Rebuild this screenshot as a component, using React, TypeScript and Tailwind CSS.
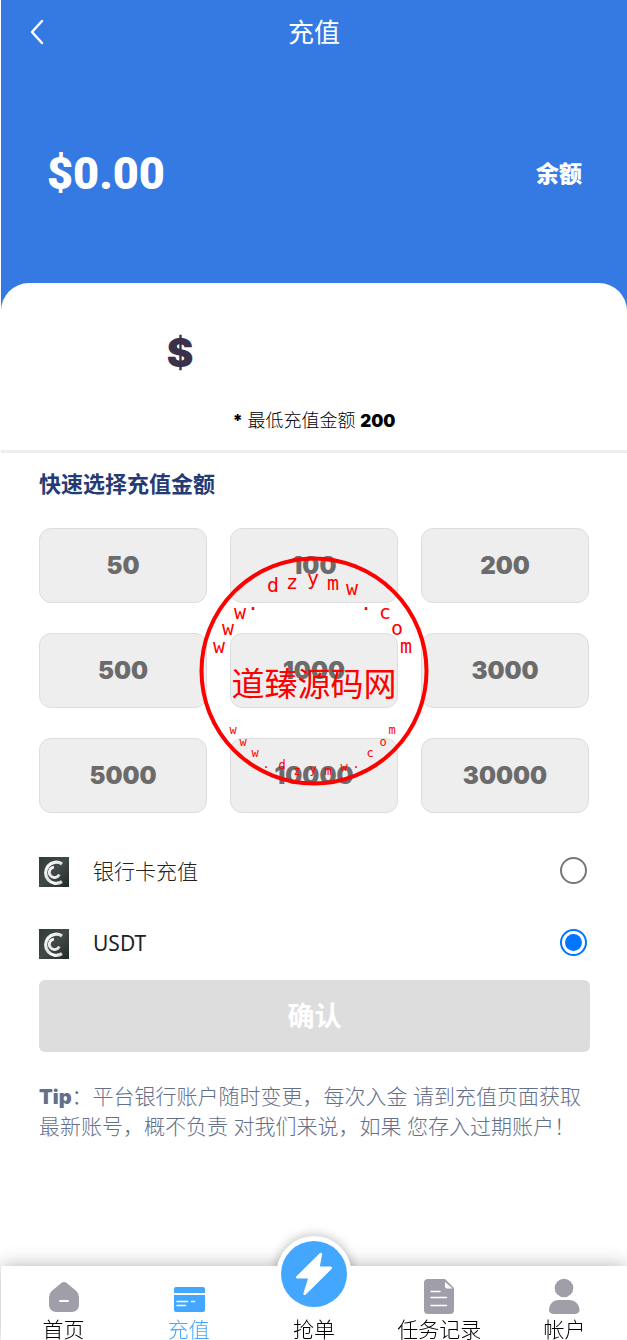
import { useState } from "react";
import type { ReactNode } from "react";

const amounts = [50, 100, 200, 500, 1000, 3000, 5000, 10000, 30000];

const methods = [
  { id: "bank", name: "银行卡充值", cls: "font-light" },
  { id: "usdt", name: "USDT", cls: "font-normal" },
];

type Glyph = [string, number, number];

const upperRing: Glyph[] = [
  ["w", 20, 97], ["w", 29, 79], ["w", 41, 63], [".", 54, 54],
  ["d", 74, 36], ["z", 93, 33], ["y", 114, 29], ["m", 134, 34], ["w", 153, 39],
  [".", 167, 54], ["c", 186, 63], ["o", 198, 79], ["m", 207, 97],
];

const lowerRing: Glyph[] = [
  ["w", 34, 178], ["w", 44, 190], ["w", 56, 201], [".", 67, 212],
  ["d", 83, 213], ["z", 98, 219], ["y", 114, 217], ["m", 129, 219], ["w", 145, 215],
  [".", 157, 212], ["c", 171, 201], ["o", 184, 190], ["m", 193, 178],
];

function Stamp() {
  return (
    <svg
      viewBox="0 0 230 230"
      className="absolute left-1/2 top-1/2 w-[230px] h-[230px] -translate-x-1/2 -translate-y-1/2 pointer-events-none fill-[#ff0000] font-['DejaVu_Sans_Mono',monospace]"
      textAnchor="middle"
    >
      <circle cx="115" cy="115" r="112.500" fill="none" stroke="#ff0000" strokeWidth="4" />
      {upperRing.map(([ch, x, y], i) => (
        <text key={i} x={x} y={y} className="text-[20px]">{ch}</text>
      ))}
      <text x="115" y="140" className="text-[33px] font-['Noto_Sans_CJK_SC',sans-serif]">道臻源码网</text>
      {lowerRing.map(([ch, x, y], i) => (
        <text key={i} x={x} y={y} className="text-[12px]">{ch}</text>
      ))}
    </svg>
  );
}

function CoinLogo() {
  return (
    <svg viewBox="0 0 30 30" className="w-[30px] h-[30px] shrink-0">
      <defs>
        <linearGradient id="plate" x1="0" y1="0" x2="1" y2="1">
          <stop offset="0" stopColor="#303a39" />
          <stop offset="0.5" stopColor="#414a48" />
          <stop offset="1" stopColor="#202a29" />
        </linearGradient>
        <linearGradient id="metal" x1="0" y1="0" x2="1" y2="1">
          <stop offset="0" stopColor="#ffffff" />
          <stop offset="0.5" stopColor="#e2e2e2" />
          <stop offset="0.7" stopColor="#ffffff" />
          <stop offset="1" stopColor="#d0d0d0" />
        </linearGradient>
      </defs>
      <rect width="30" height="30" fill="url(#plate)" />
      <path d="M23 6.900A10.600 10.600 0 1 0 23 24.700" fill="none" stroke="url(#metal)" strokeWidth="3.200" />
      <path d="M15 10.200A5.200 5.200 0 1 0 20.300 17.500" fill="none" stroke="url(#metal)" strokeWidth="2.800" />
    </svg>
  );
}

function HomeIcon() {
  return (
    <svg viewBox="0 0 36 36" className="w-9 h-9">
      <path d="M15 5.2a5 5 0 0 1 6 0l9 7.600a8 8 0 0 1 3 6.200v8a7 7 0 0 1-7 7H10a7 7 0 0 1-7-7v-8a8 8 0 0 1 3-6.200z" fill="#a09fa9" />
      <rect x="13" y="22" width="10" height="2" rx="1" fill="#fff" />
    </svg>
  );
}

function CardIcon() {
  return (
    <svg viewBox="0 0 36 36" className="w-9 h-9">
      <path d="M3 15v-4a2 2 0 0 1 2-2h27a2 2 0 0 1 2 2v4z" fill="#43a6ff" />
      <path d="M3 17h31v15a2 2 0 0 1-2 2H5a2 2 0 0 1-2-2z" fill="#43a6ff" />
      <path d="M6 23.500h10.500M6 27.500h8.500M20.500 23.500h3" stroke="#fff" strokeWidth="1.400" strokeLinecap="round" />
    </svg>
  );
}

function DocIcon() {
  return (
    <svg viewBox="0 0 36 36" className="w-9 h-9">
      <path d="M7 1h17l9 9v22a4 4 0 0 1-4 4H7a4 4 0 0 1-4-4V5a4 4 0 0 1 4-4z" fill="#a09fa9" />
      <path d="M24 4v4.500a2 2 0 0 0 2 2h5.500z" fill="#fff" />
      <path d="M10 13.500h9M10 19.500h15.500M10 27.500h15.500" stroke="#fff" strokeWidth="1.400" strokeLinecap="round" />
    </svg>
  );
}

function UserIcon() {
  return (
    <svg viewBox="0 0 36 36" className="w-9 h-9">
      <circle cx="18" cy="10" r="9.300" fill="#a09fa9" />
      <path d="M3 32.500C3 26 7.500 22 12.500 22h11C28.500 22 33.500 26 33.500 32.500c0 2-2.500 3.500-5.500 3.500H8.500C5.500 36 3 34.500 3 32.500z" fill="#a09fa9" />
    </svg>
  );
}

function BoltIcon() {
  return (
    <svg viewBox="0 0 66 66" className="w-[66px] h-[66px]">
      <path d="M38.500 12.500L15.500 35.200c-1.200 1.200-.6 2.300 1 2.300H27l-4.500 14.500c-.5 2 .9 2.800 2.300 1.400L50.300 28.200c1.200-1.200.7-2.700-.9-2.700H38.800l2.200-11.500c.4-2-1.100-2.900-2.500-1.500z" fill="#fff" />
    </svg>
  );
}

function NavItem({ label, active, children }: { label: string; active?: boolean; children: ReactNode }) {
  return (
    <a href="#" className={`relative flex-1 flex flex-col items-center justify-end text-[21px] leading-[22px] font-light ${active ? "text-[#43a6ff]" : "text-black"}`}>
      {children}
      <span className="mt-1">{label}</span>
    </a>
  );
}

export default function App() {
  const [amount, setAmount] = useState("");
  const [method, setMethod] = useState("usdt");

  return (
    <div className="min-h-screen flex flex-col bg-white pl-px font-['Noto_Sans','Noto_Sans_CJK_SC',sans-serif]">
      <header className="bg-[#357ae3] text-white">
        <div className="grid grid-cols-3 items-center h-16 px-6">
          <button type="button" aria-label="返回" className="justify-self-start">
            <svg viewBox="0 0 24 28" className="w-6 h-7" fill="none" stroke="#fff" strokeWidth="2.500" strokeLinecap="round" strokeLinejoin="round">
              <path d="M17 3L7 14l10 11" />
            </svg>
          </button>
          <h1 className="text-center text-[26px]">充值</h1>
        </div>

        {/* Balance */}
        <div className="flex items-center justify-between h-[219px] pl-[46px] pr-[45px]">
          <span className="font-['Roboto',sans-serif] font-black text-[45px]">$0.00</span>
          <span className="font-black text-[23px]">余额</span>
        </div>

        {/* Amount */}
        <div className="bg-white text-black rounded-t-[28px] h-[170px] pt-10 border-b-3 border-[#eeeeee]">
          <label className="flex items-center justify-center gap-2 font-['Inter',sans-serif] font-black text-[40px] leading-[60px] text-[#3a324a]">
            $
            <input
              aria-label="充值金额"
              inputMode="numeric"
              className="w-[260px] bg-transparent outline-none"
              value={amount}
              onChange={(e) => setAmount(e.target.value)}
            />
          </label>
          <p className="mt-6 text-center text-[18px] leading-[26px] font-light">
            <b className="font-['Inter',sans-serif] font-black text-[17px]">*</b> 最低充值金额 <b className="font-['Inter',sans-serif] font-black text-[17px]">200</b>
          </p>
        </div>
      </header>

      <main className="flex-1 pl-[38px] pr-[37px] pt-[14px]">
        <h2 className="text-[22px] leading-8 font-bold text-[#253b73]">快速选择充值金额</h2>

        <div className="relative mt-[29px] mr-px">
          <div className="grid grid-cols-3 gap-x-[23px] gap-y-[30px]">
            {amounts.map((n) => (
              <button
                key={n}
                type="button"
                onClick={() => setAmount(String(n))}
                className="h-[75px] rounded-xl border border-[#dddddd] bg-[#eeeeee] font-['Inter',sans-serif] font-black text-[24px] text-[#6b6b6b]"
              >
                {n}
              </button>
            ))}
          </div>
          <Stamp />
        </div>

        <div className="mt-11 flex flex-col gap-[42px]">
          {methods.map((m) => (
            <label key={m.id} className="flex items-center h-[30px] text-[21px] text-[#222222]">
              <CoinLogo />
              <span className={`ml-6 flex-1 ${m.cls}`}>{m.name}</span>
              <input
                type="radio"
                name="method"
                className="appearance-none w-[27px] h-[27px] mr-[3px] mb-[3px] p-[3px] rounded-full border-2 border-[#767676] bg-clip-content checked:border-[#0075ff] checked:bg-[#0075ff]"
                checked={method === m.id}
                onChange={() => setMethod(m.id)}
              />
            </label>
          ))}
        </div>

        <button type="button" className="mt-[21px] w-full h-[72px] rounded-md bg-[#dddddd] text-white text-[27px] font-bold">确认</button>

        <p className="mt-[29px] text-[21px] leading-[30px] font-light text-[#64708a]">
          <b className="font-['Inter',sans-serif] font-black text-[20px] leading-none">Tip</b>：平台银行账户随时变更，每次入金 请到充值页面获取最新账号，概不负责 对我们来说，如果 您存入过期账户！
        </p>
      </main>

      {/* Bottom tabs */}
      <nav className="sticky bottom-0 h-[74px] flex bg-white shadow-[0_0_18px_rgba(0,0,0,0.3)]">
        <NavItem label="首页"><HomeIcon /></NavItem>
        <NavItem label="充值" active><CardIcon /></NavItem>
        <NavItem label="抢单">
          {/* only the part of the ring above the bar casts a shadow */}
          <span className="absolute -top-[30px] left-1/2 -translate-x-1/2 w-[75px] h-[75px] rounded-full bg-white shadow-[0_0_12px_rgba(0,0,0,0.3)] [clip-path:inset(-20px_-20px_45px_-20px)]" />
          <span className="relative mb-[7px] rounded-full bg-[#43a6ff]"><BoltIcon /></span>
        </NavItem>
        <NavItem label="任务记录"><DocIcon /></NavItem>
        <NavItem label="帐户"><UserIcon /></NavItem>
      </nav>
    </div>
  );
}
